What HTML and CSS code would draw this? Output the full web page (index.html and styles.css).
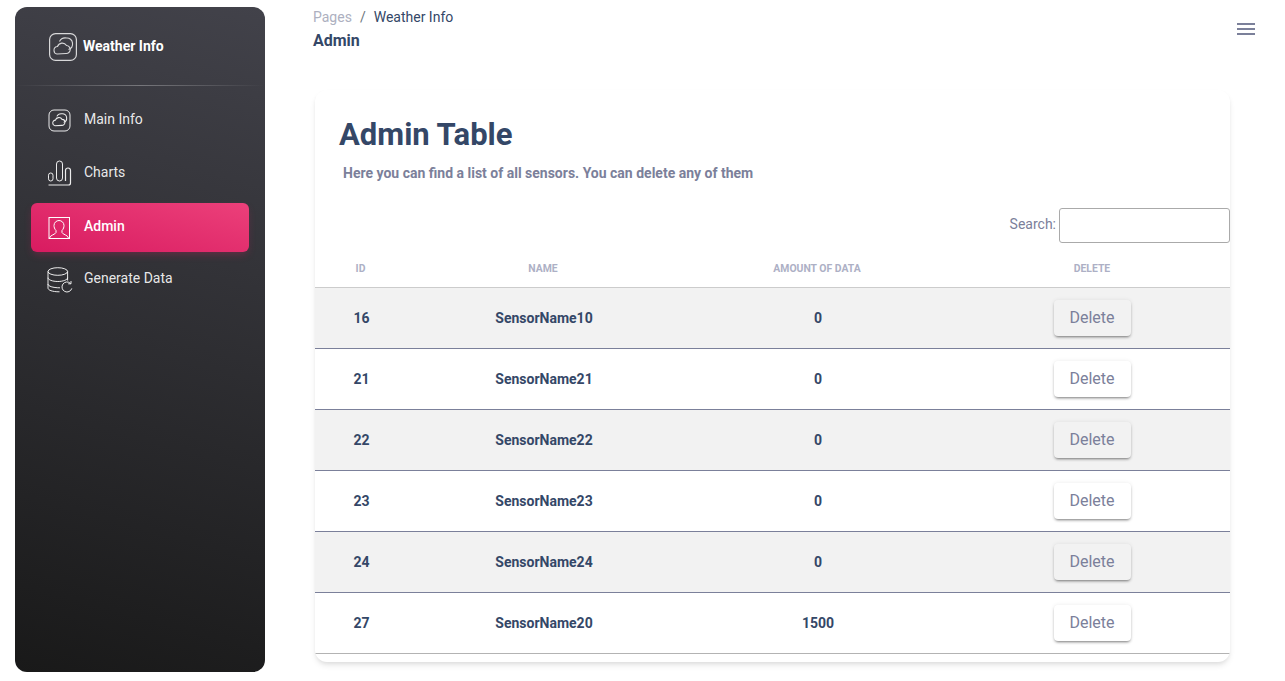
FILE: index.html
```html
<!DOCTYPE html>
<html lang="en">
<head>
    <meta charset="UTF-8">
    <meta name="viewport" content="width=device-width, initial-scale=1.0">
    <title>Admin</title>
    <link rel="stylesheet" href="styles.css">
</head>
<body>

    <aside class="sidebar">
        <div class="brand">
            <svg class="brand-icon" viewBox="0 0 28 28" fill="none" stroke="currentColor">
                <rect x="0.6" y="0.6" width="26.800" height="26.800" rx="6" stroke-width="1.2"/>
                <g stroke-width="1.100">
                    <path d="M5 17.500a3.600 3.600 0 0 1 3.500-4 5 5 0 0 1 9-1 4 4 0 0 1-.5 8L8 21a3.600 3.600 0 0 1-3-3.500z"/>
                    <path d="M10.500 8.500a6.500 6 0 0 1 7-3.500 5.500 5.500 0 0 1 6 5 6 6 0 0 1-4 6.500"/>
                </g>
            </svg>
            <span>Weather Info</span>
        </div>
        <hr class="divider">
        <nav class="nav">
            <a class="nav-item">
                <svg class="nav-icon" viewBox="0 0 24 24" fill="none" stroke="currentColor">
                    <rect x="1" y="3" width="21" height="21" rx="5"/>
                    <g transform="translate(1 3) scale(0.75)" stroke-width="1.400">
                        <path d="M5 17.500a3.600 3.600 0 0 1 3.500-4 5 5 0 0 1 9-1 4 4 0 0 1-.5 8L8 21a3.600 3.600 0 0 1-3-3.500z"/>
                        <path d="M10.500 8.500a6.500 6 0 0 1 7-3.500 5.500 5.500 0 0 1 6 5 6 6 0 0 1-4 6.500"/>
                    </g>
                </svg>
                <span>Main Info</span>
            </a>
            <a class="nav-item">
                <svg class="nav-icon" viewBox="0 0 24 24" fill="none" stroke="currentColor">
                    <rect x="0.500" y="13" width="4.500" height="8" rx="2.200"/>
                    <rect x="8.500" y="1" width="6" height="20" rx="3"/>
                    <path d="M17.500 21V10.500a2.500 2.500 0 0 1 5 0V23a2 2 0 0 1-2 2H0.500" stroke-width="1.200"/>
                </svg>
                <span>Charts</span>
            </a>
            <a class="nav-item active">
                <svg class="nav-icon" viewBox="0 0 24 24" fill="none" stroke="currentColor">
                    <rect x="1" y="1.500" width="20.500" height="21"/>
                    <path d="M1.500 22c.500-3 6-3.500 6.500-5.500v-2C6.500 13 6 11 6 9.500 6 6.500 8.500 4.500 11 4.500s5 2 5 5c0 1.500-.5 3.500-2 5v2c.500 2 6 2.500 6.500 5.500"/>
                </svg>
                <span>Admin</span>
            </a>
            <a class="nav-item">
                <svg class="nav-icon" viewBox="0 0 24 24" fill="none" stroke="currentColor" stroke-width="1.200">
                    <ellipse cx="9.800" cy="5.500" rx="9.800" ry="3.800"/>
                    <path d="M0 5.500v16.500c0 2.100 4 3.800 11.500 3.800"/>
                    <path d="M19.600 5.500v9"/>
                    <path d="M0 11.700c0 2.100 4.500 3.800 9.800 3.800s9.800-1.700 9.800-3.800"/>
                    <path d="M0 18c0 2.100 4.500 3.800 12 3.800"/>
                    <path d="M23.800 22.400a5 5 0 1 1-1.300-5"/>
                    <path d="M23 15v2.800h-2.800"/>
                </svg>
                <span>Generate Data</span>
            </a>
        </nav>
    </aside>

    <main class="content">
        <header class="topbar">
            <div>
                <div class="crumbs">
                    <span class="crumb-muted">Pages</span>
                    <span class="crumb-sep">/</span>
                    <span>Weather Info</span>
                </div>
                <div class="page-name">Admin</div>
            </div>
            <div class="burger"><i></i><i></i><i></i></div>
        </header>

        <section class="card">
            <h1>Admin Table</h1>
            <p class="lead">Here you can find a list of all sensors. You can delete any of them</p>
            <div class="search">
                <label for="search">Search:</label>
                <input id="search" type="text">
            </div>
            <table class="sensors">
                <colgroup>
                    <col class="col-id">
                    <col class="col-name">
                    <col class="col-amount">
                    <col class="col-delete">
                </colgroup>
                <thead>
                    <tr>
                        <th>ID</th>
                        <th>Name</th>
                        <th>Amount of data</th>
                        <th>Delete</th>
                    </tr>
                </thead>
                <tbody>
                    <tr>
                        <td>16</td>
                        <td>SensorName10</td>
                        <td>0</td>
                        <td class="cell-action"><button type="button">Delete</button></td>
                    </tr>
                    <tr>
                        <td>21</td>
                        <td>SensorName21</td>
                        <td>0</td>
                        <td class="cell-action"><button type="button">Delete</button></td>
                    </tr>
                    <tr>
                        <td>22</td>
                        <td>SensorName22</td>
                        <td>0</td>
                        <td class="cell-action"><button type="button">Delete</button></td>
                    </tr>
                    <tr>
                        <td>23</td>
                        <td>SensorName23</td>
                        <td>0</td>
                        <td class="cell-action"><button type="button">Delete</button></td>
                    </tr>
                    <tr>
                        <td>24</td>
                        <td>SensorName24</td>
                        <td>0</td>
                        <td class="cell-action"><button type="button">Delete</button></td>
                    </tr>
                    <tr>
                        <td>27</td>
                        <td>SensorName20</td>
                        <td>1500</td>
                        <td class="cell-action"><button type="button">Delete</button></td>
                    </tr>
                </tbody>
            </table>
        </section>
    </main>

</body>
</html>
```

FILE: styles.css
```css
html, body {
    height: 100%;
}

body {
    font-family: Roboto, "Liberation Sans", sans-serif;
    margin: 0;
    padding: 0;
    background-color: #fff;
    color: #344767;
    display: flex;
    overflow: hidden;
}

/* sidebar */
.sidebar {
    flex: none;
    box-sizing: border-box;
    width: 250px;
    height: 665px;
    margin: 7px 0 0 15px;
    border-radius: 12px;
    background-image: linear-gradient(195deg, #42424a, #191919);
    color: #fff;
}

.brand {
    display: flex;
    align-items: center;
    height: 78px;
    padding-left: 34px;
    font-size: 14px;
    font-weight: 700;
}

.brand-icon {
    width: 28px;
    height: 28px;
    margin: 2px 6px 0 0;
    opacity: 0.8;
}

.divider {
    height: 1px;
    margin: 0 0 9px;
    border: 0;
    background-image: linear-gradient(to right, rgba(255,255,255,0), rgba(255,255,255,0.3), rgba(255,255,255,0));
}

.nav {
    display: flex;
    flex-direction: column;
    gap: 5px;
    padding: 0 16px;
}

.nav-item {
    display: flex;
    align-items: center;
    height: 48px;
    padding-left: 17px;
    border-radius: 6px;
    font-size: 14px;
    color: rgba(255,255,255,0.9);
}

.nav-item span {
    margin-left: 12px;
}

.nav-icon {
    width: 24px;
    height: 24px;
    stroke-width: 1;
    overflow: visible;
}

.nav-item.active {
    box-sizing: border-box;
    height: 49px;
    margin: 2px 0 -3px;
    background-image: linear-gradient(195deg, #ec407a, #d81b60);
    box-shadow: 0 4px 8px -2px rgba(233,30,99,0.3);
    color: #fff;
    font-weight: 500;
}

.nav-item.active span {
    margin-bottom: 3px;
}

/* main column */
.content {
    flex: 1;
    min-width: 0;
    padding: 0 55px 0 50px;
}

.topbar {
    display: flex;
    justify-content: space-between;
    align-items: flex-start;
    height: 90px;
    padding-top: 9px;
    box-sizing: border-box;
    margin-right: -25px;
    margin-left: -2px;
}

.crumbs {
    font-size: 14px;
    line-height: 17px;
    display: flex;
    gap: 8px;
}

.crumb-muted {
    color: #adb0c0;
}

.crumb-sep {
    color: #6c757d;
}

.page-name {
    font-size: 16px;
    font-weight: 700;
    line-height: 20px;
    margin-top: 5px;
}

.burger {
    width: 18px;
    margin-top: 14px;
    display: flex;
    flex-direction: column;
    gap: 3px;
}

.burger i {
    display: block;
    height: 2px;
    background-color: #7b809a;
}

.card {
    background-color: #fff;
    border-radius: 12px;
    height: 572px;
    box-shadow: 0 4px 6px -1px rgba(0,0,0,0.1), 0 2px 4px -1px rgba(0,0,0,0.06);
    overflow: hidden;
}

h1 {
    margin: 0;
    padding: 26px 0 0 24px;
    font-size: 31px;
    font-weight: 700;
    line-height: 38px;
}

.lead {
    margin: 10px 0 0 28px;
    font-size: 14px;
    font-weight: 700;
    line-height: 18px;
    color: #7b809a;
}

.search {
    display: flex;
    justify-content: flex-end;
    align-items: center;
    gap: 3px;
    margin-top: 26px;
    font-size: 14px;
    color: #7b809a;
}

.search label {
    margin-bottom: 4px;
}

.search input {
    box-sizing: border-box;
    width: 171px;
    height: 35px;
    border: 1px solid #aaa;
    border-radius: 3px;
    background: transparent;
}

/* table */
.sensors {
    width: 100%;
    table-layout: fixed;
    border-collapse: collapse;
    margin-top: 10px;
}

.col-id { width: 91px; }
.col-name { width: 274px; }
.col-amount { width: 274px; }
.col-delete { width: 276px; }

th {
    box-sizing: border-box;
    height: 34px;
    padding: 0 0 2px;
    font-size: 10.4px;
    font-weight: 700;
    text-transform: uppercase;
    color: #adb0c5;
    border-bottom: 1px solid #ccc;
}

td {
    height: 60px;
    padding: 0 0 0 2px;
    text-align: center;
    font-size: 14px;
    font-weight: 700;
    border-bottom: 1px solid #7b809a;
}

tbody tr:nth-child(odd) {
    background-color: #f2f2f2;
}

tbody tr:last-child td {
    border-bottom-color: #b3b3b3;
}

.cell-action {
    padding-left: 0;
}

button {
    box-sizing: border-box;
    width: 77px;
    height: 36px;
    padding: 0;
    border: none;
    border-radius: 4px;
    color: #7b809a;
    font-family: inherit;
    font-size: 16px;
    box-shadow: 0 2px 3px -1px rgba(0,0,0,0.5), 0 0 4px rgba(0,0,0,0.08);
    vertical-align: middle;
}

tbody tr:nth-child(odd) button {
    background-color: #f2f2f2;
}

tbody tr:nth-child(even) button {
    background-color: #fff;
}
```
